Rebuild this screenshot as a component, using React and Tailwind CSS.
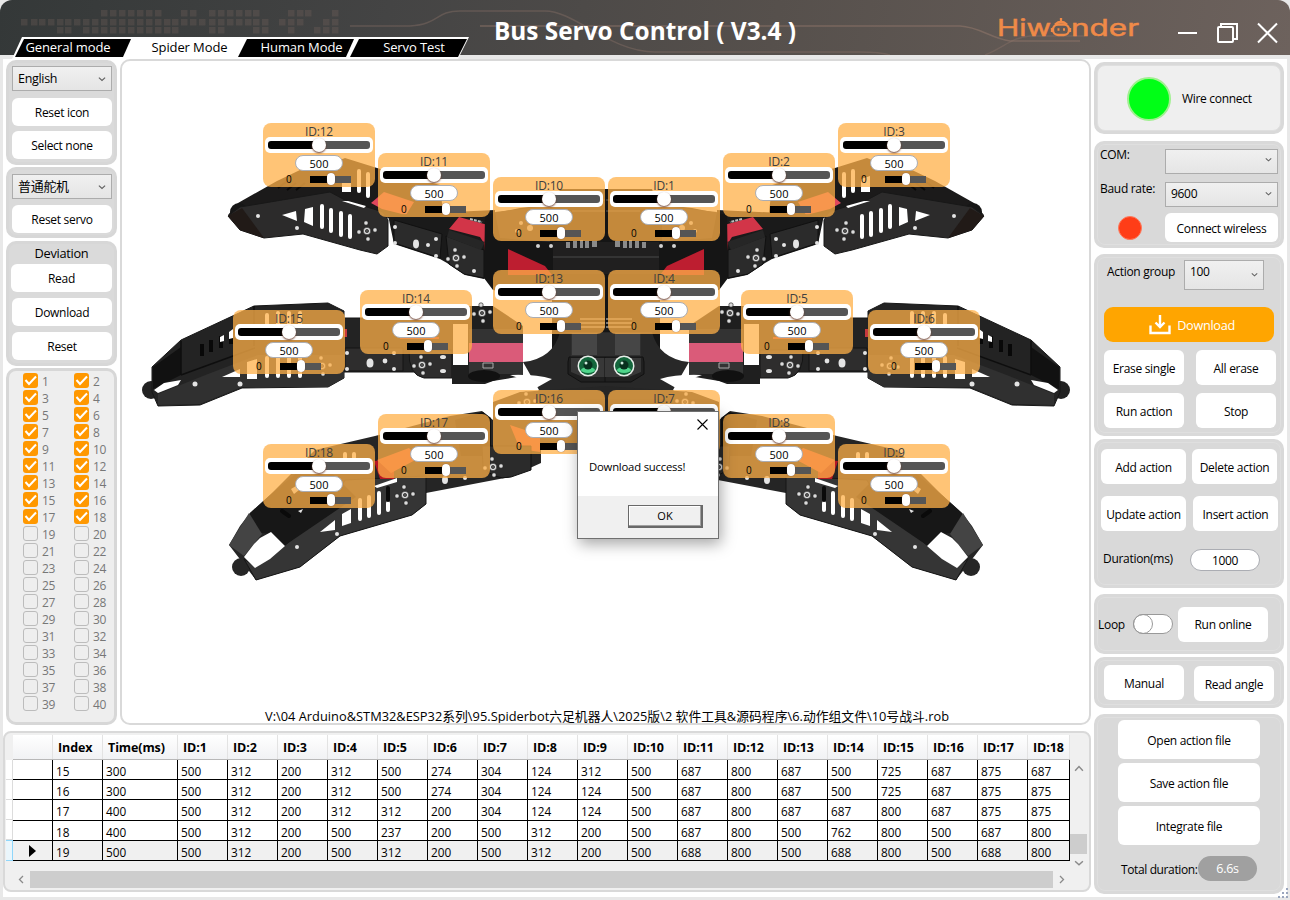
import React from "react";

const SERVOS = [
  [12, 263, 123], [11, 378, 153], [10, 493, 177], [1, 608, 177], [2, 723, 153], [3, 838, 123],
  [13, 493, 270], [4, 608, 270], [14, 360, 290], [5, 741, 290], [15, 233, 310], [6, 868, 310],
  [16, 493, 390], [7, 608, 390], [17, 378, 414], [8, 723, 414], [18, 263, 444], [9, 838, 444],
];

const ROWS = [
  [15, 300, 500, 312, 200, 312, 500, 274, 304, 124, 312, 500, 687, 800, 687, 500, 725, 687, 875, 687],
  [16, 300, 500, 312, 200, 312, 500, 274, 304, 124, 124, 500, 687, 800, 687, 500, 725, 687, 875, 875],
  [17, 400, 500, 312, 200, 312, 312, 200, 304, 124, 124, 500, 687, 800, 687, 687, 800, 687, 875, 875],
  [18, 400, 500, 312, 200, 500, 237, 200, 500, 312, 200, 500, 687, 800, 500, 762, 800, 500, 687, 800],
  [19, 500, 500, 312, 200, 500, 312, 200, 500, 312, 200, 500, 688, 800, 500, 688, 800, 500, 688, 800],
];
const ROW_H = ["h-[20px]", "h-[20px]", "h-[21px]", "h-[20px]", "h-[20px]"];
const COLS = "grid grid-cols-[40px_50px_75px_repeat(17,50px)_42px]";

const SQUARES = [
  [10, [101, 110, 119, 128, 137, 146, 155, 181, 190, 209, 218, 227, 236, 245, 253, 288, 297, 305, 332]],
  [19, [21, 31, 39, 48, 57, 65, 74, 83, 92, 101, 110, 119, 128, 137, 146, 155, 164, 172, 181, 190, 199, 209, 218, 227, 236, 245, 253, 262, 279, 288, 297, 323, 332]],
  [27, [57, 65, 83, 92, 101, 110, 119, 128, 137, 146, 155, 164, 172, 209, 218, 253, 262, 288, 314, 323, 332]],
];

function Chevron({ size = 8, dir = "down", color = "#606060" }) {
  const d = { down: "M1 3l3.5 3.2L8 3", up: "M1 6l3.5-3.8L8 6", left: "M6 1L2.5 4.5 6 8", right: "M3 1l3.5 3.5L3 8" }[dir];
  return (
    <svg className="block" width={size} height={size} viewBox="0 0 9 9" fill="none" stroke={color} strokeWidth="1.3"><path d={d} /></svg>
  );
}

function Btn({ className = "", children }) {
  return (
    <button className={"flex shrink-0 items-center justify-center whitespace-nowrap rounded-md bg-white pt-[2px] " + className}>{children}</button>
  );
}

function Select({ className = "", children, size = 8 }) {
  return (
    <div className={"flex shrink-0 items-center justify-between border border-[#acacac] bg-linear-to-b from-[#f0f0f0] to-[#e5e5e5] pl-[5px] pr-[5px] " + className}>
      <span>{children}</span>
      <Chevron size={size} />
    </div>
  );
}

function Panel({ className = "", children }) {
  return (
    <section className={"shrink-0 rounded-[10px] border-[3px] border-[#d7d7d7] bg-[#dadada] " + className}>{children}</section>
  );
}

function RightPanel({ className = "", inner = "", children }) {
  return (
    <section className={"w-[190px] shrink-0 rounded-[10px] bg-[#d9d9d9] p-[3px] " + className}>
      <div className={"h-full w-full rounded-[8px] border border-[#dfdfdf] " + inner}>{children}</div>
    </section>
  );
}

function ServoCard({ id, x, y }) {
  return (
    <div className="absolute flex h-[64px] w-[112px] flex-col items-center rounded-[8px] bg-[#ffb048]/75" style={{ left: x - 122, top: y - 61 }}>
      <div className="h-[14px] text-[12px] leading-[17px] tracking-[-0.2px] text-[#404040]">ID:{id}</div>
      <div className="relative flex h-4 w-[108px] shrink-0 items-center justify-center rounded-[5px] bg-white">
        <div className="flex h-2 w-[102px] items-center justify-center rounded-[3px] bg-[linear-gradient(90deg,#000_50%,#555_50%)]">
          <span className="mr-[1px] h-[14px] w-[14px] rounded-full bg-white shadow-[0_1px_2px_#6a3b2a]" />
        </div>
      </div>
      <div className="mt-[2px] h-4 w-[48px] shrink-0 rounded-full border border-[#abadb3] bg-white text-center text-[11px] leading-[16px] text-black">500</div>
      <div className="mt-[2px] flex h-3 w-full items-center pl-[23px]">
        <span className="w-6 text-[10px] leading-3">0</span>
        <span className="flex h-[7px] w-[41px] items-center justify-center bg-[linear-gradient(90deg,#000_50%,#555_50%)]">
          <span className="h-3 w-2 rounded-full bg-white shadow-[0_0_1px_#6a3b2a]" />
        </span>
      </div>
    </div>
  );
}

function Bolts({ x, y }) {
  return (
    <g fill="#dcdcdc" stroke="#111" strokeWidth=".6">
      <circle cx={x} cy={y} r="3.8" />
      <circle cx={x} cy={y} r="1.6" fill="#555" />
      <circle cx={x - 8} cy={y + 1} r="2.2" /><circle cx={x + 8} cy={y - 1} r="2.2" />
      <circle cx={x - 1} cy={y - 8} r="2.2" /><circle cx={x + 1} cy={y + 8} r="2.2" />
    </g>
  );
}

function HalfRobot() {
  return (
    <g strokeLinejoin="round">
      {/* front leg */}
      <path fill="#1b1a1a" d="M228 215L238 203L277 181L300 170L328 165L345 158L377 168L440 185L446 240L380 215L330 205L265 212Z" />
      <circle cx="239" cy="212" r="9" fill="#161616" />
      <path fill="#2c2b2b" stroke="#181818" d="M228 216L240 207L312 195L330 192L345 200L383 212L388 220V246L377 254L360 250L303 234L264 238L240 230Z" />
      <path fill="#211a17" d="M228 216L242 208L264 238L240 230Z" />
      <path stroke="#080808" strokeWidth="2" d="M278 188l8-6M287 190l9-7M296 190l9-7" />
      <path fill="#fff" d="M282 215l14-4 1 10zM305 209l8-2v19l-9-4z" />
      <path stroke="#fff" strokeWidth="4" strokeLinecap="round" d="M322 206v21M331 210v21M341 213v22M350 216v21M359 171v20M368 174v22" />
      <path fill="#fff" d="M342 176l9 3v13h-9zM342 201l6 0 18 5-2 2z" />
      <Bolts x={367} y={231} />
      <path fill="#e0475c" d="M371 203l13-11 30 10-8 13-24-6z" />
      <path fill="#1a1a1a" d="M388 215L495 210V270L484 279L465 275L447 263L440 259L394 244Z" />
      <path fill="#2b2b2b" stroke="#111" d="M394 220l48 14-2 24-46-15zM446 236l38 14v28l-20-4-15-10z" />
      <path fill="#d23548" d="M449 229l10-12 36 10-6 24-9-14z" />
      <path fill="#262626" d="M449 230l36 12-4 8-34-13z" />
      <path fill="#aa1724" d="M484 243l7-13 4-4v18l-10 7z" />
      <path stroke="#bbb" strokeWidth="2" strokeDasharray="3 1" d="M470 219l12 3" />
      <g fill="#e4e4e4"><circle cx="395" cy="227" r="2" /><circle cx="395" cy="243" r="2" /><ellipse cx="416" cy="244" rx="3" ry="4.4" /><circle cx="428" cy="245" r="2" /><circle cx="436" cy="239" r="2" /><circle cx="436" cy="256" r="2" /><circle cx="474" cy="271" r="2" /><circle cx="258" cy="216" r="2" /><circle cx="297" cy="228" r="2" /></g>
      <Bolts x={456} y={258} />

      {/* upper body */}
      <path fill="#151515" d="M485 215L520 208L555 204L560 189H607V400H552V300L493 290L484 278Z" />
      <path fill="#2c2b2b" d="M495 212l55-6v36l-50-4z" />
      <path fill="#bd1e30" d="M508 249l37 17 7 9h-44z" />
      <path fill="#201f1f" d="M553 242h54v32h-54z" />
      <path stroke="#343434" strokeWidth="2" fill="none" d="M553 257h54M572 200h34M572 211h34" />
      <g fill="#8a8a8a"><path d="M566 242h4v6h-4zM573 241h4v7h-4zM580 240h3v8h-3zM585 241h4v7h-4zM592 241h5v6h-5z" /></g>
      <g fill="#d0d0d0"><circle cx="538" cy="246" r="2" /><circle cx="551" cy="246" r="2" /><circle cx="521" cy="223" r="2" /><circle cx="530" cy="228" r="3" /><circle cx="517" cy="231" r="2" /></g>

      {/* middle leg */}
      <circle cx="151" cy="390" r="9" fill="#222" />
      <path fill="#232323" stroke="#171717" d="M152 367L181 340L254 306L328 303L344 311V318H453V372L344 372V378L328 387L242 388L200 405L158 406L152 392Z" />
      <path fill="#111" d="M153 367l28-20v28l-28 14z" />
      <path fill="#303030" d="M158 394l50-20 50-19h86v23l-16 9h-86l-42 17-42 1z" />
      <path stroke="#0e0e0e" strokeWidth="1.5" fill="none" d="M181 341v34M181 375l74-27M254 306v40" />
      <path fill="#fff" d="M154 390l10-7 17-3-3 5-20 8zM222 377l18-8v8zM247 362l10-3v20h-10z" />
      <path stroke="#fff" strokeWidth="4" strokeLinecap="round" d="M267 315v20M278 313v20M289 313v20M300 313v20M267 358v18M278 358v18M289 358v18M300 358v18" />
      <path stroke="#080808" strokeWidth="4" d="M202 344v12M211 340v12M221 336v12M231 332v12" />
      <path fill="#fff" d="M220 337l4-2v6l-4 1zM229 332l4-3v9l-4 1z" />
      <path fill="#c63a3d" d="M344 329h3v8h-3zM400 337h39v2h-39z" />
      <path fill="#2e2d2d" stroke="#151515" d="M345 348h58v23h-58zM409 350h43v28h-28q-16-3-15-28z" />
      <path fill="#1f1f1f" d="M453 306h40l30 20v50l-30 5-8 3h-33v-60z" />
      <path fill="#fff" d="M453 324h15v41h-15zM429 330h6v4h-6z" />
      <path fill="#333" d="M469 329h54v45h-54z" />
      <path fill="#da5b79" d="M469 343h54v19h-54z" />
      <path fill="#fff" d="M523 330q14 1 22 5q7 4 7 10q-2 6-12 9l-17 4z" />
      <path fill="none" stroke="#aaa" d="M483 363h10v5h-10z" />
      <ellipse cx="484" cy="376" rx="16" ry="6" fill="#111" />
      <g fill="#e4e4e4"><ellipse cx="370" cy="363" rx="3.5" ry="4.5" /><circle cx="347" cy="353" r="2" /><circle cx="347" cy="369" r="2" /><circle cx="385" cy="361" r="2.4" /><circle cx="394" cy="353" r="2" /><circle cx="394" cy="369" r="2" /><ellipse cx="443" cy="357" rx="3" ry="2" /><ellipse cx="443" cy="371" rx="3" ry="2" /><circle cx="195" cy="384" r="2.5" /><circle cx="240" cy="384" r="2.5" /></g>
      <Bolts x={422} y={365} /><Bolts x={482} y={313} /><Bolts x={322} y={366} />

      {/* head and centre */}
      <path fill="#282828" d="M523 362q30-3 37-30h47v70H493q40-3 46-12z" />
      <path fill="#fff" d="M510 375q25-1 42 4l-16 9q-10-8-26-13z" />
      <path fill="#303030" d="M571 333h36v25h-36z" />
      <path fill="#464646" d="M572 333h25v22h-25z" />
      <path fill="#202020" stroke="#111" d="M569 357h38v25h-26l-13-8v-12z" />
      <path fill="#383838" d="M571 358h36v19h-24l-12-5z" />
      <g fill="#777"><path d="M580 318h26v2h-26zM580 322h26v2h-26zM580 326h26v2h-26z" /></g>

      {/* rear leg */}
      <path fill="#252525" d="M493 402L520 392L607 386V450H541V463L510 477L426 493V504L412 515L340 536L300 567L256 580L229 545L240 526L250 513L270 495L315 450L375 436L450 416L482 411L493 420Z" />
      <circle cx="241" cy="567" r="9" fill="#262626" />
      <path fill="#353535" stroke="#171717" d="M284 546L330 508L345 480L426 476V504L412 515L340 536L300 567L256 580L244 559L256 567Z" />
      <path fill="#171717" d="M250 513l20-18 46-38 40 40-72 49-14-12-29-4z" />
      <path fill="#444" d="M229 545l20-32 13 21-18 22z" />
      <path fill="#fff" d="M244 557l10-13 6-6 11-6 14 14-15 13-15 9zM320 532l15-12v10zM342 514l9-5v14l-9 3zM374 486l23-8v4l-20 6z" />
      <path stroke="#fff" strokeWidth="4" strokeLinecap="round" d="M360 500v19M369 497v19M379 493v20M388 503v7M345 454v18M354 454v18" />
      <path stroke="#0a0a0a" strokeWidth="4" strokeLinecap="round" d="M388 488v12M282 511l7 5" />
      <path fill="#b51724" d="M374 461l20-2 0 20h-14z" />
      <path fill="#e04a42" d="M377 460l32-12 10 10-28 15zM460 440l25-9v13h-20zM510 425l30 10v17l-20-3z" />
      <path fill="#101010" d="M455 420l28-8 8 6v38h-30z" />
      <path fill="#2b2b2b" stroke="#111" d="M482 446l49 0v24l-20 7q-18 4-28-11z" />
      <Bolts x={405} y={495} /><Bolts x={493} y={467} /><Bolts x={527} y={402} />
      <g fill="#e4e4e4"><ellipse cx="445" cy="480" rx="3" ry="4" /><circle cx="465" cy="478" r="2" /><circle cx="337" cy="534" r="2" /><circle cx="297" cy="547" r="2" /><path d="M291 489l5-3 3 4-5 4zM298 511l5-2-2 4z" /></g>
    </g>
  );
}

function Eye({ x }) {
  return (
    <g>
      <circle cx={x} cy="366" r="10.5" fill="#e6eee9" />
      <circle cx={x} cy="366" r="9" fill="#14663c" />
      <ellipse cx={x} cy="370" rx="7" ry="3" fill="#4fd58b" />
      <circle cx={x} cy="365" r="4.5" fill="#08301e" />
      <circle cx={x - 2} cy="363" r="1.5" fill="#cceadb" />
    </g>
  );
}

function Robot() {
  return (
    <svg className="absolute left-0 top-0" width="967" height="540" viewBox="122 61 967 540">
      <HalfRobot />
      <g transform="translate(1212 0) scale(-1 1)"><HalfRobot /></g>
      <Eye x={588} /><Eye x={624} />
    </svg>
  );
}

function Header() {
  return (
    <header className="relative flex h-[55px] shrink-0 items-start justify-end rounded-t-[12px] bg-[linear-gradient(100deg,#343838_0%,#444444_30%,#56504c_60%,#6d625d_100%)]">
      <svg className="absolute left-0 top-0" width="1290" height="55" fill="none">
        {SQUARES.map(([y, xs]) => xs.map((x) => <rect key={x + "-" + y} x={x} y={y} width="6.5" height="6.5" fill="#8b7068" fillOpacity=".22" />))}
        <g stroke="#8d7469" strokeOpacity=".6" strokeWidth="1.5">
          <path d="M350 26H410C440 24 435 11 460 11H545C575 11 610 52 655 52H860Q880 52 890 55" strokeOpacity=".4" />
          <path d="M480 26H960C980 27 990 38 1010 41H1080" />
          <path d="M985 55C1005 47 1010 38 1030 36H1085" strokeOpacity=".4" />
        </g>
      </svg>
      <h1 className="absolute inset-x-0 top-[14px] text-center text-[24.4px] font-bold leading-[34px] text-white">Bus Servo Control ( V3.4 )</h1>
      <svg className="relative mr-[38px] mt-[14px]" width="142" height="28">
        <g fill="#f08a48" stroke="#f08a48" strokeWidth=".5" fontFamily="Inter, 'Liberation Sans', sans-serif" fontSize="23">
          <text x="-1" y="22" textLength="54" lengthAdjust="spacingAndGlyphs">Hiw</text>
          <text x="73" y="22" textLength="68" lengthAdjust="spacingAndGlyphs">nder</text>
        </g>
        <g fill="none" stroke="#f08a48" strokeWidth="2.3">
          <rect x="55" y="10.5" width="16" height="10.5" rx="5" />
          <path d="M57 10.5Q63 5 69 10.500M63 4v4M54 14v4M72 14v4" />
          <path d="M59.5 15.5h2M65 15.5h2" />
        </g>
      </svg>
      <svg className="relative mr-[12px] mt-[22px]" width="100" height="22" fill="none" stroke="#fff" strokeWidth="2">
        <path d="M0 11h19M80 1.500l19 19M99 1.500l-19 19" />
        <rect x="40" y="5" width="15" height="15" rx="1" />
        <path d="M43 5V2h16v15h-4" />
      </svg>
    </header>
  );
}

function Tabs() {
  const black = "flex h-[18px] items-center justify-center bg-black text-white ";
  return (
    <nav className="relative z-10 -mt-[18px] ml-[12px] h-[22px] w-[457px] shrink-0 bg-white pl-[3px] pt-[2px] text-[13px] tracking-[-0.1px] [clip-path:polygon(10px_0,457px_0,446px_22px,0_22px)]">
      <div className="flex leading-[16px]">
        <div className={black + "w-[116px] pb-[2px] pr-[10px] [clip-path:polygon(9px_0,100%_0,108px_100%,0_100%)]"}>General mode</div>
        <div className="flex h-[18px] w-[107px] items-center justify-center pb-[2px] pl-[10px]">Spider Mode</div>
        <div className={black + "w-[116px] pb-[2px] pl-[11px] [clip-path:polygon(9px_0,100%_0,108px_100%,0_100%)]"}>Human Mode</div>
        <div className={black + "-ml-[4px] w-[117px] pb-[2px] pl-[11px] [clip-path:polygon(9px_0,100%_0,108px_100%,0_100%)]"}>Servo Test</div>
      </div>
    </nav>
  );
}

function CheckItem({ n }) {
  return (
    <label className="flex h-[17px] items-center gap-[4px] text-[12px] text-[#777]">
      {n <= 18 ? (
        <span className="flex h-[15px] w-[15px] items-center justify-center rounded-[3px] bg-[#ff9800]">
          <svg width="13" height="13" viewBox="0 0 13 13" fill="none" stroke="#fff" strokeWidth="2"><path d="M1.500 6l3.500 4L12 2.500" /></svg>
        </span>
      ) : (
        <span className="h-[15px] w-[15px] rounded-[3px] border border-[#bcbcbc]" />
      )}
      <span className="pt-[2px]">{n}</span>
    </label>
  );
}

function LeftColumn() {
  return (
    <aside className="flex w-[111px] shrink-0 flex-col text-[12px] tracking-[-0.3px]">
      <Panel className="mt-[1px] flex h-[105px] flex-col px-[3px] pt-[3px]">
        <Select className="h-[25px] w-[100px] pt-[1px] text-[12.5px]">English</Select>
        <Btn className="mt-[7px] h-[28px] w-[100px]">Reset icon</Btn>
        <Btn className="mt-[5px] h-[28px] w-[100px]">Select none</Btn>
      </Panel>
      <Panel className="mt-[2px] flex h-[71px] flex-col px-[3px] pt-[4px]">
        <Select className="h-[25px] w-[100px] text-[13px]">普通舵机</Select>
        <Btn className="mt-[6px] h-[28px] w-[100px]">Reset servo</Btn>
      </Panel>
      <Panel className="mt-[3px] flex h-[125px] flex-col px-[3px]">
        <div className="h-[20px] text-center text-[12.8px] leading-[19px]">Deviation</div>
        <Btn className="-ml-[1px] h-[28px] w-[101px]">Read</Btn>
        <Btn className="mt-[6px] h-[28px] w-[100px]">Download</Btn>
        <Btn className="mt-[6px] h-[28px] w-[100px]">Reset</Btn>
      </Panel>
      <Panel className="mt-[2px] h-[357px] bg-[#eeeeee] pl-[14px] pt-[1px]">
        <div className="grid grid-cols-[51px_40px]">
          {Array.from({ length: 40 }, (_, i) => <CheckItem key={i} n={i + 1} />)}
        </div>
      </Panel>
    </aside>
  );
}

function Dialog() {
  return (
    <div className="absolute left-[455px] top-[350px] flex h-[128px] w-[142px] flex-col border border-[#707070] bg-[#f0f0f0] shadow-[2px_5px_14px_rgba(0,0,0,0.35)]">
      <div className="h-[84px] bg-white">
        <div className="flex justify-end pr-[10px] pt-[7px]">
          <svg width="11" height="11" stroke="#000" strokeWidth="1.1"><path d="M.5.5l10 10M10.500.5l-10 10" /></svg>
        </div>
        <p className="mt-[29px] pl-[11px] text-[11.3px] font-medium leading-[16px] tracking-[-0.2px]">Download success!</p>
      </div>
      <button className="ml-[50px] mt-[9px] flex h-[23px] w-[75px] items-center justify-center border border-b-2 border-r-2 border-[#696969] bg-[#f0f0f0] text-[11px] shadow-[inset_-1px_-1px_#a0a0a0,inset_1px_1px_#fff]">OK</button>
    </div>
  );
}

function Canvas() {
  return (
    <main className="relative flex h-[666px] w-[971px] shrink-0 items-end overflow-hidden rounded-[10px] border-2 border-[#d9d9d9] bg-white">
      <Robot />
      {SERVOS.map(([id, x, y]) => <ServoCard key={id} id={id} x={x} y={y} />)}
      <Dialog />
      <p className="ml-[143px] whitespace-nowrap text-[12.8px] leading-[13px] tracking-[0.02px]">V:\04 Arduino&amp;STM32&amp;ESP32系列\95.Spiderbot六足机器人\2025版\2 软件工具&amp;源码程序\6.动作组文件\10号战斗.rob</p>
    </main>
  );
}

function DataTable() {
  const heads = ["Index", "Time(ms)", ...Array.from({ length: 18 }, (_, i) => "ID:" + (i + 1))];
  return (
    <section className="mt-[6px] flex h-[161px] w-[1088px] shrink-0 flex-col rounded-[8px] border-2 border-[#d9d9d9] bg-[#f0f0f0] pl-[1px] pt-[2px]">
      <div className="flex h-[126px] shrink-0">
        <div className="mt-[25px] flex h-[101px] w-[7px] flex-col">
          {[0, 1, 2, 3].map((i) => <i key={i} className="h-[20px] border-b border-r border-[#dcdcdc] bg-white" />)}
          <i className="h-[21px] border-y border-r border-[#8fd6fa] bg-[#eaf6fc]" />
        </div>
        <div className="w-[1057px]">
          <div className={COLS + " h-[25px] w-[1057px] border-b border-[#b8b8b8] bg-linear-to-b from-white to-[#f1f2f4] text-[12.5px] font-bold tracking-[-0.1px]"}>
            <span className="border-r border-[#e3e3e3]" />
            {heads.map((h) => <span key={h} className="flex items-center whitespace-nowrap border-r border-[#e3e3e3] pl-[5px] pt-[3px]">{h}</span>)}
          </div>
          {ROWS.map((r, i) => (
            <div key={i} className={COLS + " w-[1057px] text-[11.8px] leading-[16px] " + ROW_H[i] + (i === 4 ? " bg-[#f0f0f0]" : " bg-white")}>
              <span className="flex items-center justify-center border-b border-r border-black">
                {i === 4 && <svg width="7" height="12"><path d="M0 0l7 6-7 6z" /></svg>}
              </span>
              {r.map((v, j) => <span key={j} className="flex items-center border-b border-r border-black pl-[3px] pt-[2px]">{v}</span>)}
            </div>
          ))}
        </div>
        <div className="flex w-[17px] shrink-0 flex-col items-center">
          <span className="mt-[29px]"><Chevron size={10} dir="up" color="#8a8a8a" /></span>
          <span className="mt-[60px] h-[20px] w-[17px] shrink-0 bg-[#cdcdcd]" />
          <span className="mt-[4px]"><Chevron size={10} color="#8a8a8a" /></span>
        </div>
      </div>
      <div className="mt-[10px] flex h-[17px] items-center">
        <span className="flex w-[24px] justify-center pl-[7px]"><Chevron size={9} dir="left" color="#8a8a8a" /></span>
        <span className="h-[17px] w-[1023px] bg-[#cdcdcd]" />
        <span className="pl-[4px]"><Chevron size={9} dir="right" color="#8a8a8a" /></span>
      </div>
    </section>
  );
}

function RightColumn() {
  return (
    <aside className="ml-[3px] mt-[3px] flex w-[190px] shrink-0 flex-col text-[12px] tracking-[-0.3px]">
      <RightPanel className="h-[72px]" inner="bg-[#efefef] flex items-center pl-[29px]">
        <span className="mt-[1px] h-[44px] w-[44px] rounded-full border-2 border-[#a0f090] bg-[#00ff16]" />
        <span className="pl-[11px] pt-[2px]">Wire connect</span>
      </RightPanel>
      <RightPanel className="mt-[7px] h-[107px]" inner="grid grid-cols-[65px_113px] grid-rows-[25px_8px_25px_6px_29px] pl-[2px] pt-[4px]">
        <span className="leading-[12px]">COM:</span><Select className="h-[25px] pb-[4px]" size={7} />
        <i className="col-span-2" />
        <span className="leading-[14px]">Baud rate:</span><Select className="h-[25px] pb-[2px]" size={7}>9600</Select>
        <i className="col-span-2" />
        <span className="flex items-center pl-[18px]"><i className="h-[24px] w-[24px] rounded-full border border-[#ff7a5c] bg-[#ff3d17]" /></span>
        <Btn className="h-[29px]">Connect wireless</Btn>
      </RightPanel>
      <RightPanel className="mt-[6px] h-[182px]" inner="pl-[6px] pt-[2px]">
        <div className="flex pl-[3px]">
          <span className="w-[77px] pt-[3px] leading-[17px]">Action group</span>
          <div className="flex h-[30px] w-[80px] shrink-0 justify-between border border-[#acacac] bg-linear-to-b from-[#f0f0f0] to-[#e5e5e5] px-[5px]">
            <span className="leading-[22px]">100</span>
            <span className="pt-[10px]"><Chevron size={7} /></span>
          </div>
        </div>
        <button className="mt-[17px] flex h-[35px] w-[170px] items-center justify-center gap-[6px] rounded-[9px] bg-[#ffa500] pl-[6px] text-[12.7px] text-white">
          <svg width="22" height="20" viewBox="0 0 22 20" fill="none" stroke="#fff" strokeWidth="2.400"><path d="M1.500 10.500v7.500h19v-7.500M11 0v12M6.500 7.500L11 12l4.500-4.500" /></svg>
          <span className="pt-[2px]">Download</span>
        </button>
        <div className="mt-[8px] grid grid-cols-[80px_80px] gap-x-[12px] gap-y-[8px]">
          <Btn className="h-[35px]">Erase single</Btn><Btn className="h-[35px]">All erase</Btn>
          <Btn className="h-[35px] pt-[3px]">Run action</Btn><Btn className="h-[35px] pt-[3px]">Stop</Btn>
        </div>
      </RightPanel>
      <RightPanel className="mt-[3px] h-[149px]" inner="pl-[3px] pt-[6px]">
        <div className="flex gap-[6px]"><Btn className="h-[35px] w-[85px]">Add action</Btn><Btn className="h-[35px] w-[85px]">Delete action</Btn></div>
        <div className="mt-[12px] flex gap-[7px]"><Btn className="h-[35px] w-[85px]">Update action</Btn><Btn className="h-[35px] w-[85px]">Insert action</Btn></div>
        <div className="mt-[18px] flex pl-[2px]">
          <span className="w-[87px] leading-[20px]">Duration(ms)</span>
          <span className="flex h-[22px] w-[70px] items-center justify-center rounded-full border border-[#abadb3] bg-white pt-[1px]">1000</span>
        </div>
      </RightPanel>
      <RightPanel className="mt-[6px] h-[60px]" inner="flex items-center">
        <span className="w-[35px] pt-[2px]">Loop</span>
        <span className="h-[20px] w-[40px] rounded-full border border-[#999] bg-white"><i className="-ml-[1px] -mt-[1px] block h-[20px] w-[20px] rounded-full border border-[#999]" /></span>
        <Btn className="ml-[5px] h-[35px] w-[90px]">Run online</Btn>
      </RightPanel>
      <RightPanel className="mt-[3px] h-[51px]" inner="flex pl-[6px] pt-[4px]">
        <Btn className="h-[35px] w-[80px]">Manual</Btn>
        <Btn className="ml-[10px] mt-[1px] h-[35px] w-[80px]">Read angle</Btn>
      </RightPanel>
      <RightPanel className="mt-[6px] h-[180px]" inner="flex flex-col items-center pt-[2px]">
        <Btn className="h-[39px] w-[142px]">Open action file</Btn>
        <Btn className="mt-[4px] h-[39px] w-[142px]">Save action file</Btn>
        <Btn className="mt-[4px] h-[39px] w-[142px]">Integrate file</Btn>
        <div className="mt-[11px] flex h-[25px] w-[136px] items-center whitespace-nowrap">
          <span className="w-[77px] pt-[2px] tracking-[-0.38px]">Total duration:</span>
          <span className="flex h-[25px] w-[59px] shrink-0 items-center justify-center rounded-full bg-[#a0a0a0] pt-[2px] text-[12.5px] text-white">6.6s</span>
        </div>
      </RightPanel>
    </aside>
  );
}

export default function App() {
  return (
    <div className="flex h-[900px] w-[1290px] flex-col overflow-hidden bg-[#e8e8e8] font-['Open_Sans','Noto_Sans_CJK_SC',sans-serif] text-black">
      <Header />
      <Tabs />
      <div className="mx-[3px] flex h-[838px] shrink-0 bg-white">
        <div className="w-[1088px]">
          <div className="flex gap-[3px] pl-[3px]">
            <LeftColumn />
            <Canvas />
          </div>
          <DataTable />
        </div>
        <RightColumn />
      </div>
      <svg className="absolute left-[1276px] top-[886px]" width="14" height="14" fill="#9aa5bd">
        <path d="M10 2h2v2h-2zM6 6h2v2H6zM10 6h2v2h-2zM2 10h2v2H2zM6 10h2v2H6zM10 10h2v2h-2z" />
      </svg>
    </div>
  );
}
